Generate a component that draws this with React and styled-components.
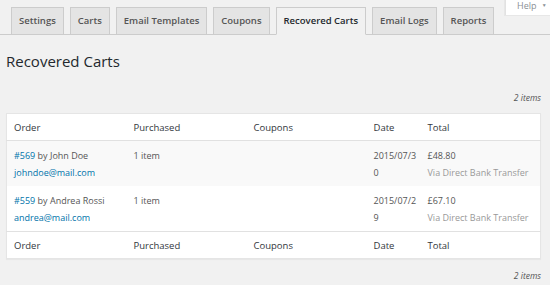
import React from 'react'
import styled, { createGlobalStyle } from 'styled-components'

const GlobalStyle = createGlobalStyle`
  body {
    margin: 0;
    background: #f1f1f1;
    font-family: "Open Sans", "Liberation Sans", sans-serif;
    color: #444;
  }
`

const tabs = ['Settings', 'Carts', 'Email Templates', 'Coupons', 'Recovered Carts', 'Email Logs', 'Reports']

const orders = [
  { id: '#569', name: 'John Doe', email: 'johndoe@mail.com', items: '1 item', date: '2015/07/30', total: '£48.80', method: 'Via Direct Bank Transfer' },
  { id: '#559', name: 'Andrea Rossi', email: 'andrea@mail.com', items: '1 item', date: '2015/07/29', total: '£67.10', method: 'Via Direct Bank Transfer' },
]

const App = () => {
  return (
    <Wrap>
      <GlobalStyle />
      <TabBar>
        {tabs.map(t => (
          <Tab key={t} $active={t === 'Recovered Carts'}>{t}</Tab>
        ))}
        <HelpTab>Help <span>▼</span></HelpTab>
      </TabBar>
      <Title>Recovered Carts</Title>
      <Count>2 items</Count>
      <Table>
        <colgroup>
          <col style={{ width: 120 }} />
          <col style={{ width: 120 }} />
          <col style={{ width: 120 }} />
          <col style={{ width: 54 }} />
          <col />
        </colgroup>
        <thead>
          <tr>
            <Th>Order</Th>
            <Th>Purchased</Th>
            <Th>Coupons</Th>
            <Th>Date</Th>
            <Th>Total</Th>
          </tr>
        </thead>
        <tbody>
          {orders.map((o, i) => (
            <Row key={o.id} $alt={i % 2 === 0}>
              <Td>
                <Link>{o.id}</Link> by {o.name}
                <br />
                <Link>{o.email}</Link>
              </Td>
              <Td>{o.items}</Td>
              <Td></Td>
              <DateCell>{o.date}</DateCell>
              <Td>
                {o.total}
                <br />
                <Muted>{o.method}</Muted>
              </Td>
            </Row>
          ))}
        </tbody>
        <tfoot>
          <tr>
            <Th $foot>Order</Th>
            <Th $foot>Purchased</Th>
            <Th $foot>Coupons</Th>
            <Th $foot>Date</Th>
            <Th $foot>Total</Th>
          </tr>
        </tfoot>
      </Table>
      <Count $bottom>2 items</Count>
    </Wrap>
  )
}

const Wrap = styled.div`
  padding: 0 9px 0 6px;
  width: 550px;
  box-sizing: border-box;
`

const TabBar = styled.div`
  display: flex;
  align-items: flex-end;
  gap: 6px;
  margin: 0 -9px 0 -6px;
  padding: 7px 0 0 11px;
  border-bottom: 1px solid #cccccc;
  height: 27px;
`

const Tab = styled.div`
  box-sizing: border-box;
  height: 28px;
  margin-bottom: -1px;
  padding: 0 7px;
  line-height: 26px;
  font-size: 9.5px;
  font-weight: 600;
  color: ${p => (p.$active ? '#23282d' : '#555')};
  background: ${p => (p.$active ? '#f1f1f1' : '#e4e4e4')};
  border: 1px solid #cccccc;
  border-bottom-color: ${p => (p.$active ? '#f1f1f1' : '#cccccc')};
  white-space: nowrap;
`

const HelpTab = styled.div`
  align-self: flex-start;
  margin: -7px 0 0 auto;
  height: 15px;
  width: 45px;
  flex-shrink: 0;
  box-sizing: border-box;
  padding-left: 11px;
  background: #fff;
  border-left: 1px solid #e2e2e2;
  box-shadow: 0 0 0 1px rgba(0, 0, 0, 0.04);
  font-size: 9px;
  line-height: 10px;
  color: #8a8f94;
  white-space: nowrap;
  span {
    font-size: 5px;
    vertical-align: 2px;
    margin-left: 3px;
  }
`

const Title = styled.h1`
  margin: 15px 0 0;
  font-size: 15px;
  font-weight: 400;
  line-height: 22px;
  color: #23282d;
`

const Count = styled.div`
  margin: ${p => (p.$bottom ? '11px 0 0' : '20px 0 9px')};
  text-align: right;
  font-size: 8.5px;
  line-height: 12px;
  font-style: italic;
  color: #555;
`

const Table = styled.table`
  width: 535px;
  table-layout: fixed;
  border-collapse: collapse;
  background: #fff;
  border: 1px solid #e5e5e5;
  box-shadow: 0 1px 1px rgba(0, 0, 0, 0.04);
  font-size: 9px;
`

const Th = styled.th`
  height: 26px;
  padding: 0 7px;
  text-align: left;
  font-weight: 400;
  font-size: 9.5px;
  color: #32373c;
  border-bottom: ${p => (p.$foot ? 'none' : '1px solid #e1e1e1')};
  border-top: ${p => (p.$foot ? '1px solid #e1e1e1' : 'none')};
`

const Row = styled.tr`
  background: ${p => (p.$alt ? '#f9f9f9' : '#fff')};
  & + & td {
    border-top: 1px solid #ececec;
  }
`

const Td = styled.td`
  padding: 6px 7px 5px;
  vertical-align: top;
  line-height: 17px;
  color: #555;
`

const DateCell = styled(Td)`
  word-break: break-all;
  padding-right: 2px;
`

const Link = styled.a`
  color: #0073aa;
  text-decoration: none;
`

const Muted = styled.span`
  color: #999;
`

export default App
